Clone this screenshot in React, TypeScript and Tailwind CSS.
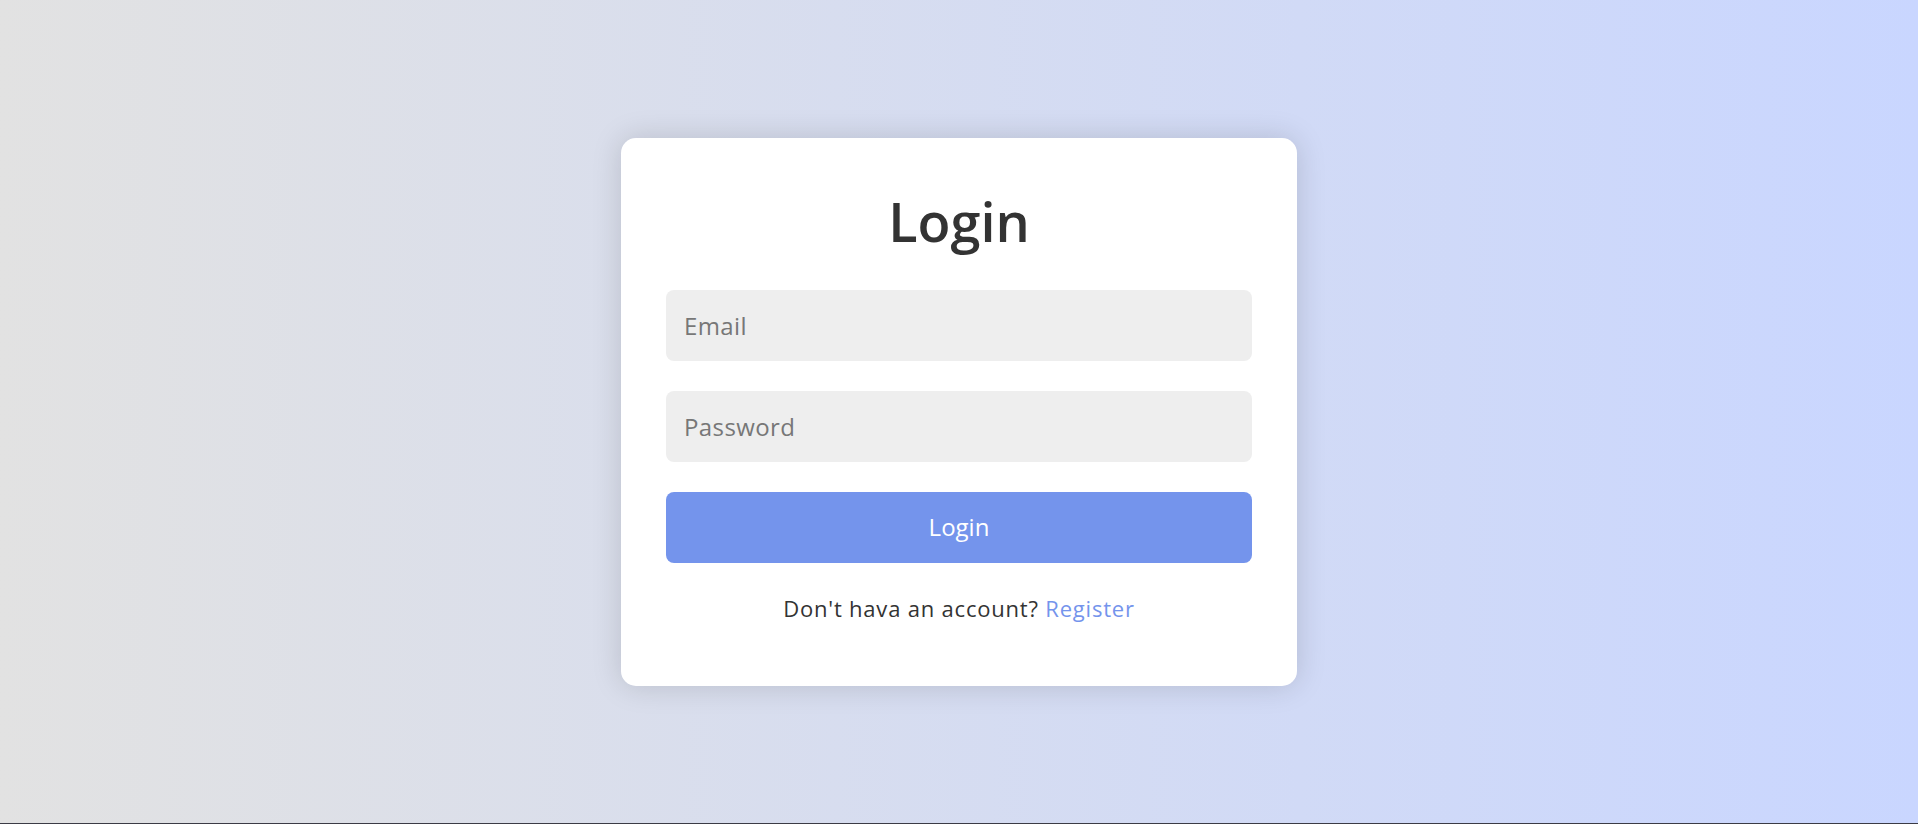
export default function App() {
  return (
    <div className="flex h-screen flex-col" style={{ fontFamily: '"Open Sans", "Noto Sans", sans-serif' }}>
      <main className="flex flex-1 items-center justify-center bg-gradient-to-r from-[#e2e2e2] to-[#c9d6ff]">
        <div className="w-[676px] rounded-[15px] bg-white px-[45px] pb-[45px] pt-[45px] shadow-[0_0_30px_rgba(0,0,0,0.15)]">
          <h1 className="mb-[31px] text-center text-[54px] font-semibold leading-[76px] text-[#333]">Login</h1>
          <form className="flex flex-col gap-[30px]" onSubmit={(e) => e.preventDefault()}>
            <input
              type="email"
              placeholder="Email"
              className="h-[71px] w-full rounded-[8px] bg-[#eee] px-[18px] text-[24px] tracking-[0.4px] text-[#333] outline-none placeholder:text-[#777]"
            />
            <input
              type="password"
              placeholder="Password"
              className="h-[71px] w-full rounded-[8px] bg-[#eee] px-[18px] text-[24px] tracking-[0.4px] text-[#333] outline-none placeholder:text-[#777]"
            />
            <button type="submit" className="h-[71px] w-full rounded-[8px] bg-[#7494ec] text-[24px] font-medium text-white">
              Login
            </button>
          </form>
          <p className="mt-[29px] mb-[16px] text-center text-[22px] leading-[33px] tracking-[0.8px] text-[#333]">
            Don't hava an account? <a href="#" className="text-[#7494ec]">Register</a>
          </p>
        </div>
      </main>
      <div className="h-px bg-[#3b3b45]" />
    </div>
  );
}
